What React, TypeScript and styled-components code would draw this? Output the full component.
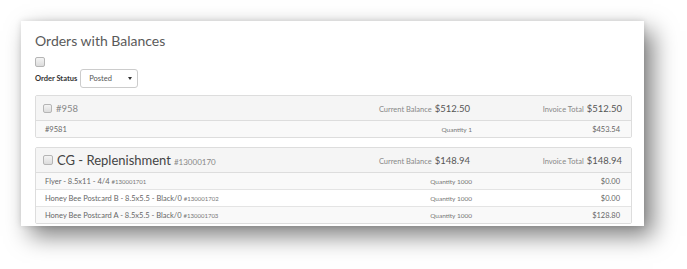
import React from 'react';
import styled, { createGlobalStyle } from 'styled-components';

const GlobalStyle = createGlobalStyle`
  html, body {
    margin: 0;
    padding: 0;
    background: #ffffff;
    font-family: Lato, 'Open Sans', sans-serif;
    color: #555;
  }
`;

const Page = styled.div`
  width: 687px;
  height: 269px;
  padding: 21px 0 0 21px;
  box-sizing: border-box;
  overflow: hidden;
`;

const Card = styled.div`
  width: 623px;
  height: 205px;
  box-sizing: border-box;
  background: #fff;
  padding: 10px 12px 0 14px;
  box-shadow: 9px 10px 22px rgba(0, 0, 0, 0.5), 0 0 6px rgba(0, 0, 0, 0.12);
`;

const Title = styled.h1`
  margin: 0;
  font-size: 14px;
  font-weight: 400;
  line-height: 20px;
  color: #5a5a5a;
`;

const Check = styled.span<{ $size?: number }>`
  display: inline-block;
  width: ${(p) => p.$size ?? 9}px;
  height: ${(p) => p.$size ?? 9}px;
  border: 1px solid #b5b5b5;
  border-radius: 2px;
  background: linear-gradient(#f4f4f4, #dcdcdc);
  box-sizing: border-box;
  flex-shrink: 0;
`;

const TopCheck = styled.div`
  margin-top: 6px;
  height: 10px;
  display: flex;
`;

const StatusRow = styled.div`
  display: flex;
  align-items: center;
  gap: 3px;
  margin-top: 2px;
`;

const StatusLabel = styled.span`
  font-size: 7.5px;
  font-weight: 700;
  color: #333;
`;

const Select = styled.div`
  width: 58px;
  height: 19px;
  box-sizing: border-box;
  border: 1px solid #ccc;
  border-radius: 3px;
  display: flex;
  align-items: center;
  justify-content: space-between;
  padding: 0 5px 0 8px;
  font-size: 7.5px;
  color: #555;
`;

const Caret = styled.span`
  width: 0;
  height: 0;
  border-left: 2px solid transparent;
  border-right: 2px solid transparent;
  border-top: 3px solid #333;
`;

const Panel = styled.div<{ $first?: boolean }>`
  margin-top: ${(p) => (p.$first ? 7 : 9)}px;
  border: 1px solid #ddd;
  border-radius: 2px;
  overflow: hidden;
`;

const Header = styled.div`
  display: grid;
  grid-template-columns: 1fr auto 152px;
  align-items: center;
  height: 24px;
  padding: 0 9px 0 7px;
  background: #f5f5f5;
  border-bottom: 1px solid #ddd;
`;

const Name = styled.div`
  display: flex;
  align-items: center;
  gap: 4px;
`;

const OrderTitle = styled.span<{ $big?: boolean }>`
  font-size: ${(p) => (p.$big ? 13 : 9.5)}px;
  color: ${(p) => (p.$big ? '#444' : '#888')};
  white-space: nowrap;
`;

const OrderNo = styled.span`
  font-size: 8px;
  color: #888;
  margin-left: 3px;
`;

const Amount = styled.div`
  justify-self: end;
  white-space: nowrap;
  display: flex;
  align-items: baseline;
  gap: 3px;
`;

const Small = styled.span`
  font-size: 7.5px;
  color: #888;
`;

const Big = styled.span`
  font-size: 9.5px;
  color: #555;
`;

const Row = styled.div<{ $striped?: boolean }>`
  display: grid;
  grid-template-columns: 1fr auto 148px;
  align-items: center;
  height: 16px;
  padding: 0 11px 0 9px;
  background: ${(p) => (p.$striped ? '#f9f9f9' : '#fff')};
  border-top: 1px solid #e4e4e4;
  font-size: 7.5px;
  color: #666;
  &:first-of-type {
    border-top: none;
  }
`;

const Code = styled.span`
  font-size: 6px;
  color: #777;
  margin-left: 2px;
`;

const Right = styled.span`
  justify-self: end;
  white-space: nowrap;
`;

const Qty = styled(Right)`
  font-size: 6.5px;
  color: #777;
`;

type Item = { name: string; code?: string; qty: string; price: string };

type Order = {
  title: string;
  no?: string;
  big?: boolean;
  balance: string;
  total: string;
  items: Item[];
};

const orders: Order[] = [
  {
    title: '#958',
    balance: '$512.50',
    total: '$512.50',
    items: [{ name: '#9581', qty: 'Quantity 1', price: '$453.54' }],
  },
  {
    title: 'CG - Replenishment',
    no: '#13000170',
    big: true,
    balance: '$148.94',
    total: '$148.94',
    items: [
      { name: 'Flyer - 8.5x11 - 4/4', code: '#130001701', qty: 'Quantity 1000', price: '$0.00' },
      { name: 'Honey Bee Postcard B - 8.5x5.5 - Black/0', code: '#130001702', qty: 'Quantity 1000', price: '$0.00' },
      { name: 'Honey Bee Postcard A - 8.5x5.5 - Black/0', code: '#130001703', qty: 'Quantity 1000', price: '$128.80' },
    ],
  },
];

const OrderPanel = ({ order, first }: { order: Order; first?: boolean }) => (
  <Panel $first={first}>
    <Header>
      <Name>
        <Check $size={order.big ? 10 : 9} />
        <OrderTitle $big={order.big}>
          {order.title}
          {order.no && <OrderNo>{order.no}</OrderNo>}
        </OrderTitle>
      </Name>
      <Amount>
        <Small>Current Balance</Small>
        <Big>{order.balance}</Big>
      </Amount>
      <Amount>
        <Small>Invoice Total</Small>
        <Big>{order.total}</Big>
      </Amount>
    </Header>
    <div>
      {order.items.map((item, i) => (
        <Row key={i} $striped={i % 2 === 0}>
          <span>
            {item.name}
            {item.code && <Code>{item.code}</Code>}
          </span>
          <Qty>{item.qty}</Qty>
          <Right>{item.price}</Right>
        </Row>
      ))}
    </div>
  </Panel>
);

export default function App() {
  return (
    <Page>
      <GlobalStyle />
      <Card>
        <Title>Orders with Balances</Title>
        <TopCheck>
          <Check $size={10} />
        </TopCheck>
        <StatusRow>
          <StatusLabel>Order Status</StatusLabel>
          <Select>
            Posted
            <Caret />
          </Select>
        </StatusRow>
        {orders.map((o, i) => (
          <OrderPanel key={i} order={o} first={i === 0} />
        ))}
      </Card>
    </Page>
  );
}
